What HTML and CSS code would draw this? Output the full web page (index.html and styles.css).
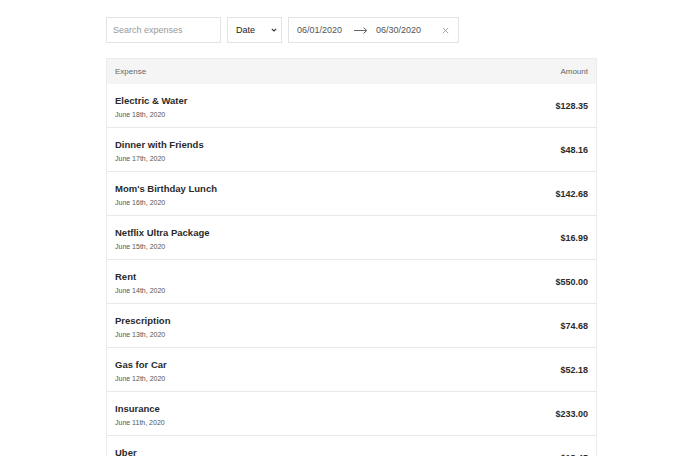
FILE: index.html
```html
<!DOCTYPE html>
<html>
<head>
<meta charset="utf-8">
<link rel="stylesheet" href="styles.css">
</head>
<body>
<div class="page">
  <div class="filters">
    <div class="search">Search expenses</div>
    <div class="select">Date <svg class="chev" width="6" height="4" viewBox="0 0 6 4"><path d="M0.8 0.8 L3 3 L5.2 0.8" fill="none" stroke="#333" stroke-width="1.1"/></svg></div>
    <div class="range">
      <span class="d">06/01/2020</span>
      <svg class="arrow" width="14" height="7" viewBox="0 0 14 7"><path d="M0 3.5 H12.5 M9.5 0.6 L12.8 3.5 L9.5 6.4" fill="none" stroke="#555" stroke-width="0.9"/></svg>
      <span class="d">06/30/2020</span>
      <svg class="x" width="7" height="7" viewBox="0 0 7 7"><path d="M0.8 0.8 L6.2 6.2 M6.2 0.8 L0.8 6.2" fill="none" stroke="#999" stroke-width="0.9"/></svg>
    </div>
  </div>
  <div class="table">
    <div class="head"><span>Expense</span><span>Amount</span></div>
    <div class="row"><div><div class="name">Electric &amp; Water</div><div class="date">June 18th, 2020</div></div><div class="amt">$128.35</div></div>
    <div class="row"><div><div class="name">Dinner with Friends</div><div class="date">June 17th, 2020</div></div><div class="amt">$48.16</div></div>
    <div class="row"><div><div class="name">Mom's Birthday Lunch</div><div class="date">June 16th, 2020</div></div><div class="amt">$142.68</div></div>
    <div class="row"><div><div class="name">Netflix Ultra Package</div><div class="date">June 15th, 2020</div></div><div class="amt">$16.99</div></div>
    <div class="row"><div><div class="name">Rent</div><div class="date">June 14th, 2020</div></div><div class="amt">$550.00</div></div>
    <div class="row"><div><div class="name">Prescription</div><div class="date">June 13th, 2020</div></div><div class="amt">$74.68</div></div>
    <div class="row"><div><div class="name">Gas for Car</div><div class="date">June 12th, 2020</div></div><div class="amt">$52.18</div></div>
    <div class="row"><div><div class="name">Insurance</div><div class="date">June 11th, 2020</div></div><div class="amt">$233.00</div></div>
    <div class="row"><div><div class="name">Uber</div><div class="date">June 10th, 2020</div></div><div class="amt">$18.45</div></div>
  </div>
</div>
</body>
</html>
```
FILE: styles.css
```css
html, body { margin: 0; padding: 0; background: #fff; }
body { font-family: "Liberation Sans", Arial, sans-serif; color: #222; overflow: hidden; height: 456px; }
.page { padding: 17px 97px 0 106px; }
.filters { display: flex; gap: 6px; height: 26px; }
.filters > div { box-sizing: border-box; border: 1px solid #e3e3e3; height: 26px; display: flex; align-items: center; font-size: 9px; }
.search { width: 115px; padding-left: 6px; color: #999; }
.select { width: 55px; padding: 0 4px 0 8px; justify-content: space-between; color: #222; }
.range { width: 171px; padding: 0 9px 0 8px; color: #555; }
.range .arrow { margin: 0 8px 0 12px; }
.range .x { margin-left: auto; }
.table { margin-top: 15px; width: 491px; box-sizing: border-box; border: 1px solid #ececec; border-bottom: none; }
.head { background: #f5f5f5; height: 25px; display: flex; justify-content: space-between; align-items: center; padding: 0 8px 0 8px; font-size: 8px; color: #666; }
.row { height: 44px; box-sizing: border-box; border-bottom: 1px solid #e8e8e8; display: flex; justify-content: space-between; align-items: center; padding: 1px 8px 0 8px; }
.name { font-size: 9.5px; font-weight: bold; color: #2a2a2a; }
.date { font-size: 7px; color: #555; margin-top: 5px; }
.amt { font-size: 9px; font-weight: bold; color: #2a2a2a; }
```
